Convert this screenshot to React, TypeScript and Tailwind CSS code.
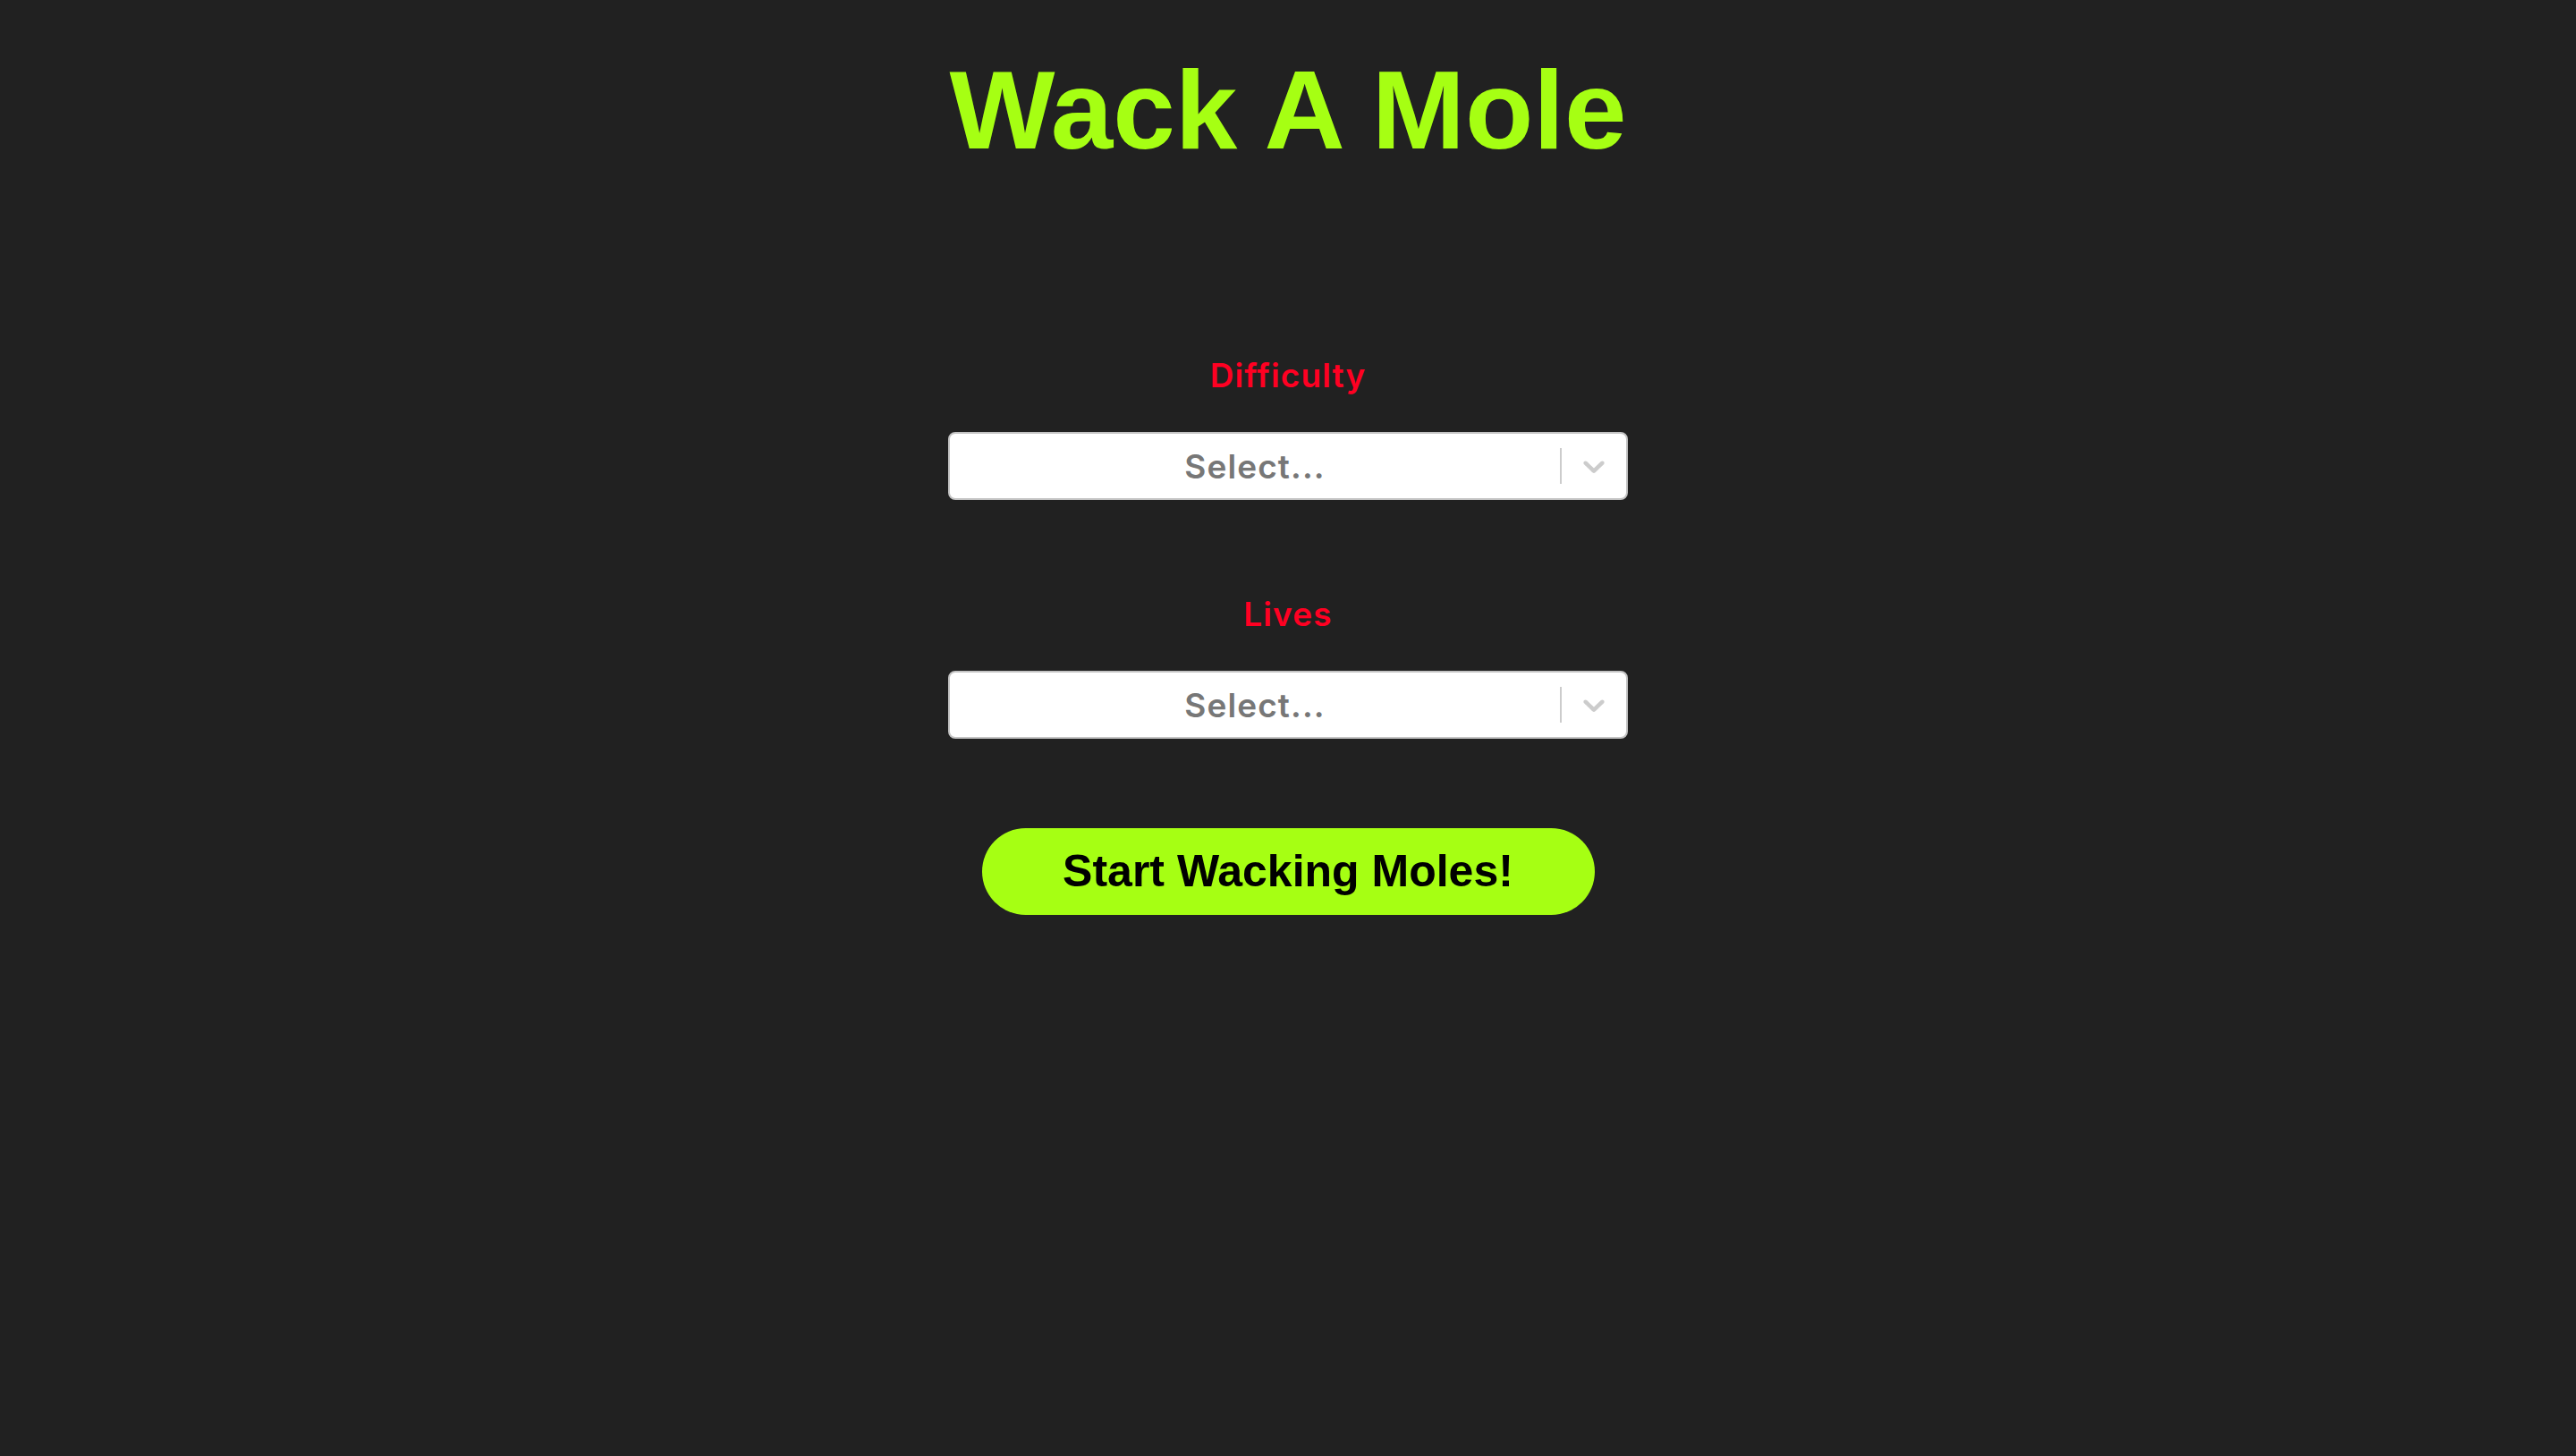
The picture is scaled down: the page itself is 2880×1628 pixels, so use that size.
import React from 'react';

const Chevron = () => (
  <svg viewBox="0 0 20 20" width={40} height={40} className="fill-[#cccccc]">
    <path d="M4.516 7.548c0.436-0.446 1.043-0.481 1.576 0l3.908 3.747 3.908-3.747c0.533-0.481 1.141-0.446 1.574 0 0.436 0.445 0.408 1.197 0 1.615-0.406 0.418-4.695 4.502-4.695 4.502-0.217 0.223-0.502 0.335-0.787 0.335s-0.57-0.112-0.789-0.335c0 0-4.287-4.084-4.695-4.502s-0.436-1.17 0-1.615z" />
  </svg>
);

const SelectBox = () => (
  <div className="flex items-stretch w-[760px] h-[76px] bg-white border-2 border-[#c4c4c4] rounded-[8px]">
    <div className="flex-1 flex items-center justify-center px-4">
      <span className="text-[37px] leading-none font-semibold tracking-[0.03em] text-[#777777] font-['Inter',sans-serif]">Select...</span>
    </div>
    <div className="flex items-stretch">
      <span className="w-[2px] my-4 bg-[#cccccc]"></span>
      <div className="flex items-center p-4">
        <Chevron />
      </div>
    </div>
  </div>
);

const Field = ({ label, top }: { label: string; top: string }) => (
  <div className={`flex flex-col items-center ${top}`}>
    <label className="text-[37px] leading-none font-semibold tracking-[0.03em] text-[#ff0022] font-['Inter',sans-serif]">{label}</label>
    <div className="mt-[45px]">
      <SelectBox />
    </div>
  </div>
);

export default function App() {
  return (
    <div className="min-h-screen w-full bg-[#212121] flex flex-col items-center pt-[60px]">
      <h1 className="text-[125px] leading-none font-bold text-[#a6ff13] font-['Liberation_Sans',Arial,sans-serif]">
        Wack A Mole
      </h1>

      <Field label="Difficulty" top="mt-[216px]" />
      <Field label="Lives" top="mt-[109px]" />

      <button className="mt-[100px] w-[685px] h-[97px] rounded-full bg-[#a6ff13] text-black text-[50px] font-bold font-['Liberation_Sans',Arial,sans-serif]">
        Start Wacking Moles!
      </button>
    </div>
  );
}
